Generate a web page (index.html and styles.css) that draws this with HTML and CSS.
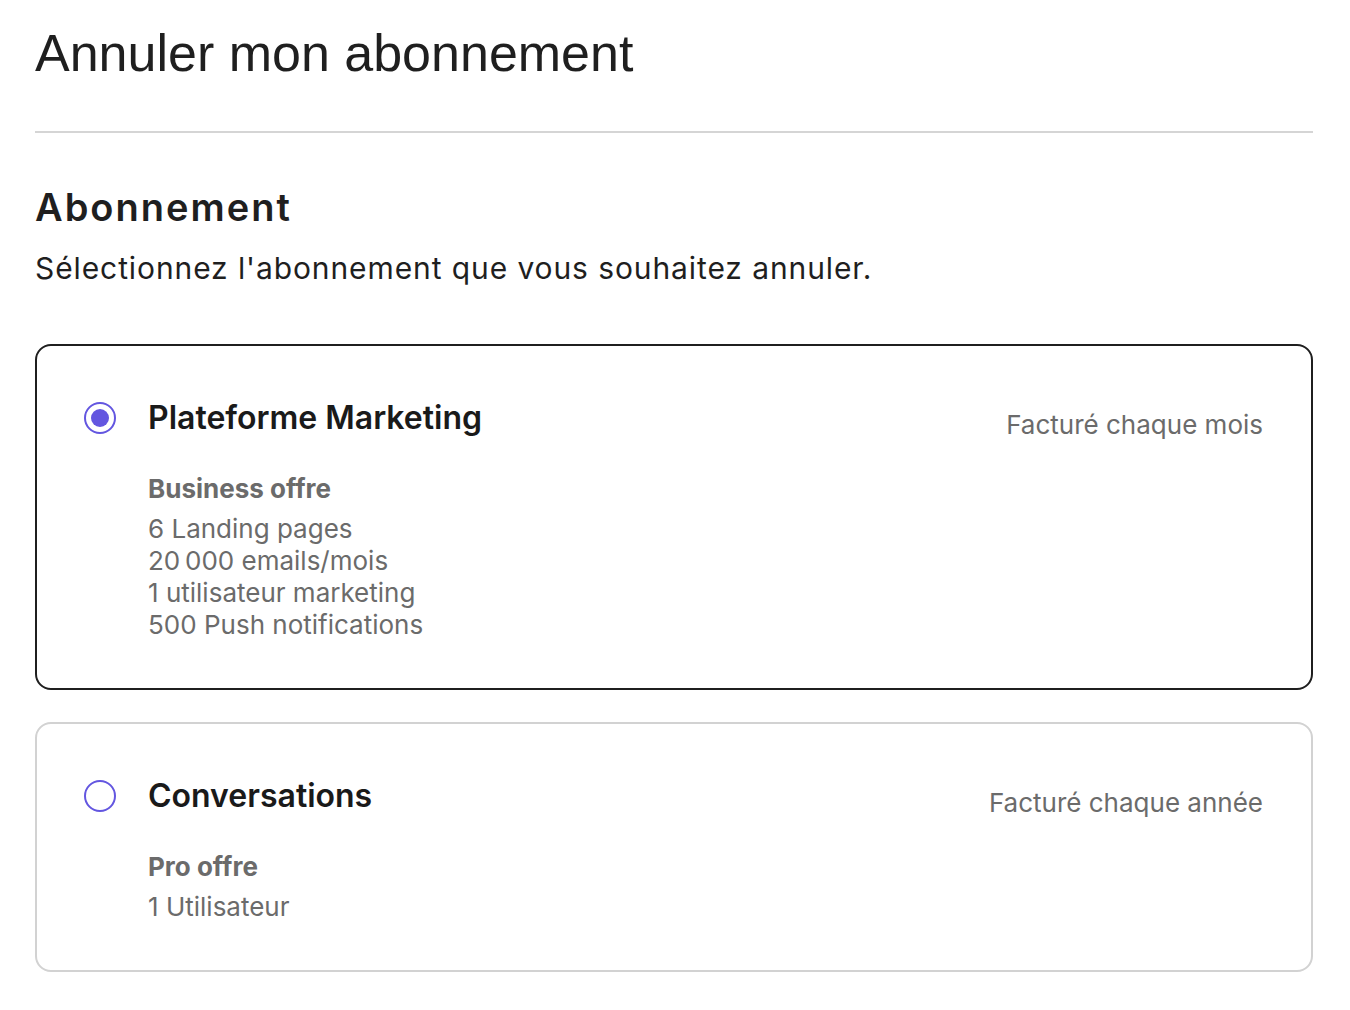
FILE: index.html
```html
<!DOCTYPE html>
<html lang="fr">
<head>
    <meta charset="UTF-8">
    <meta name="viewport" content="width=device-width, initial-scale=1.0">
    <title>Annuler mon abonnement</title>
    <link rel="stylesheet" href="styles.css">
</head>
<body>
    <div class="page">
        <h1 class="title">Annuler mon abonnement</h1>
        <hr class="divider">

        <h2 class="section-title">Abonnement</h2>
        <p class="intro">Sélectionnez l'abonnement que vous souhaitez annuler.</p>

        <div class="plans">
            <label class="plan selected">
                <input type="radio" name="plan" checked>
                <span class="radio"></span>
                <div class="plan-body">
                    <div class="plan-head">
                        <span class="plan-name">Plateforme Marketing</span>
                        <span class="billing">Facturé chaque mois</span>
                    </div>
                    <div class="offer">Business offre</div>
                    <ul class="features">
                        <li>6 Landing pages</li>
                        <li>20&#8239;000 emails/mois</li>
                        <li>1 utilisateur marketing</li>
                        <li>500 Push notifications</li>
                    </ul>
                </div>
            </label>

            <label class="plan">
                <input type="radio" name="plan">
                <span class="radio"></span>
                <div class="plan-body">
                    <div class="plan-head">
                        <span class="plan-name">Conversations</span>
                        <span class="billing">Facturé chaque année</span>
                    </div>
                    <div class="offer">Pro offre</div>
                    <ul class="features">
                        <li>1 Utilisateur</li>
                    </ul>
                </div>
            </label>
        </div>
    </div>
</body>
</html>
```

FILE: styles.css
```css
* {
    padding: 0;
    margin: 0;
    box-sizing: border-box;
}

body {
    font-family: Inter, "Noto Sans", sans-serif;
    color: #1f1f1f;
    background: #fff;
}

.page {
    padding: 24px 37px 0 35px;
}

/* titre principal */
.title {
    font-family: "Liberation Sans", Arial, sans-serif;
    font-size: 52px;
    font-weight: 400;
    line-height: 58px;
    color: #1f1f1f;
}

.divider {
    border: none;
    border-top: 2px solid #d5d5d5;
    margin-top: 49px;
}

.section-title {
    font-size: 38px;
    font-weight: 600;
    letter-spacing: 2px;
    line-height: 44px;
    margin-top: 52px;
}

.intro {
    font-size: 30px;
    letter-spacing: 0.9px;
    line-height: 40px;
    margin-top: 19px;
}

/* cartes */
.plans {
    margin-top: 56px;
    display: flex;
    flex-direction: column;
    gap: 32px;
}

.plan {
    display: flex;
    gap: 32px;
    border: 2px solid #d2d2d2;
    border-radius: 16px;
    padding: 52px 48px 47px 47px;
    cursor: pointer;
}

.plan.selected {
    border-color: #1f1f1f;
}

.plan input {
    display: none;
}

.radio {
    flex: none;
    width: 32px;
    height: 32px;
    margin-top: 4px;
    border: 2px solid #6356e0;
    border-radius: 50%;
    position: relative;
}

.plan input:checked + .radio::after {
    content: "";
    position: absolute;
    left: 5px;
    top: 5px;
    width: 18px;
    height: 18px;
    border-radius: 50%;
    background: #6356e0;
}

.plan-body {
    flex: 1;
}

.plan-head {
    display: flex;
    justify-content: space-between;
    align-items: flex-start;
}

.plan-name {
    font-size: 32px;
    font-weight: 600;
    line-height: 40px;
    color: #1a1a1a;
}

.billing {
    font-size: 26px;
    line-height: 32px;
    color: #6b6b6b;
    margin-top: 11px;
}

.offer {
    font-size: 26px;
    font-weight: 700;
    color: #6b6b6b;
    margin-top: 32px;
    line-height: 32px;
}

.features {
    list-style: none;
    margin-top: 8px;
    font-size: 26px;
    line-height: 32px;
    color: #6b6b6b;
}
```
